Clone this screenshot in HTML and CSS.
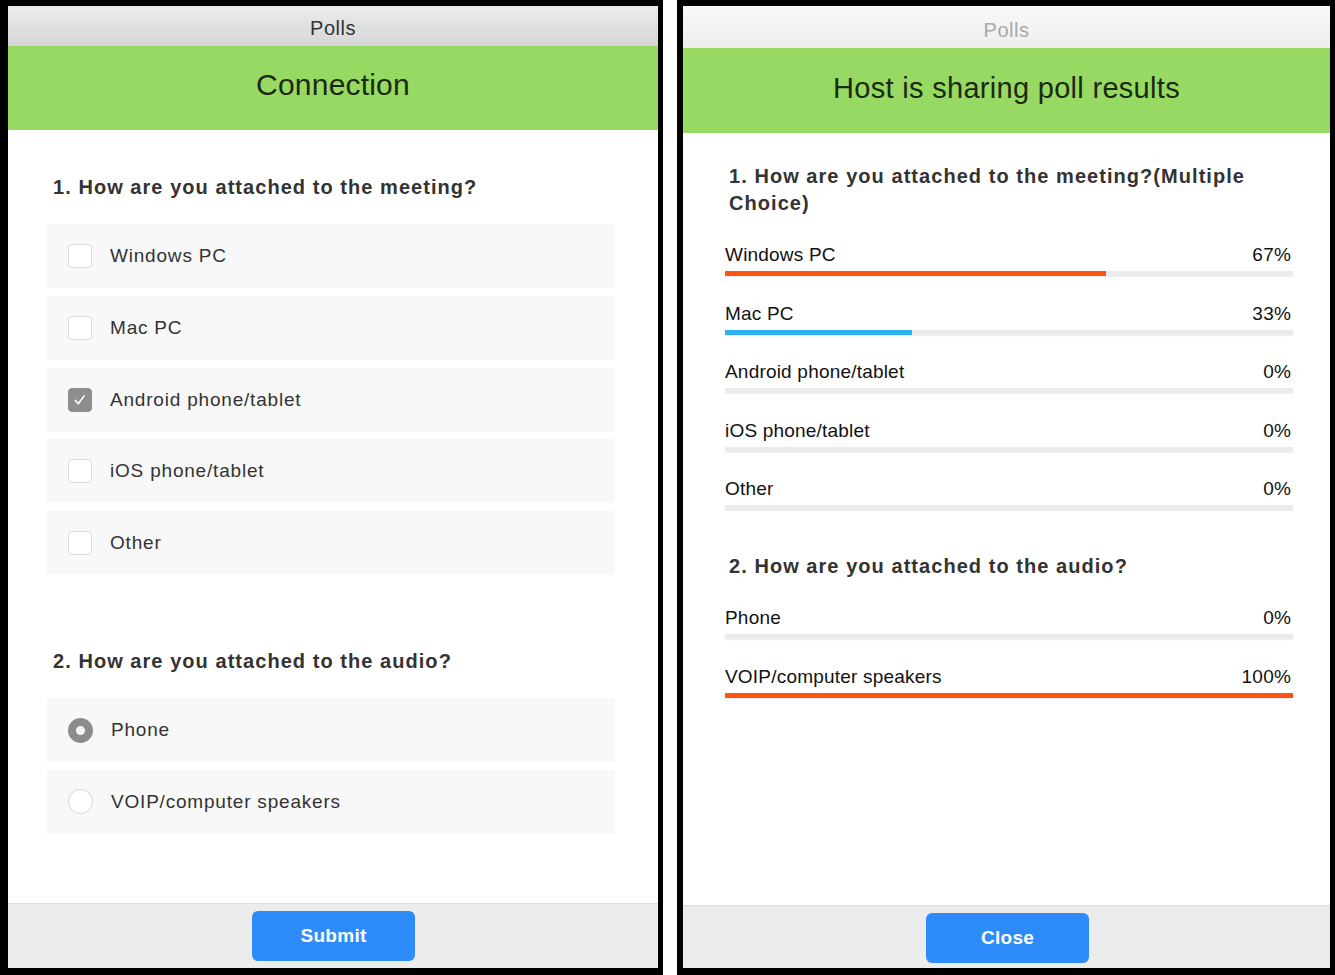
FILE: index.html
```html
<!DOCTYPE html>
<html lang="en">
<head>
<meta charset="utf-8">
<title>Polls</title>
<link rel="stylesheet" href="styles.css">
</head>
<body>
<div class="stage">
  <section class="panel panel-left">
    <header class="titlebar">Polls</header>
    <div class="banner">Connection</div>
    <main class="content vote">
      <h2 class="q q1">1. How are you attached to the meeting?</h2>
      <ul class="options">
        <li class="opt"><span class="box"></span><span class="lbl">Windows PC</span></li>
        <li class="opt"><span class="box"></span><span class="lbl">Mac PC</span></li>
        <li class="opt"><span class="box checked"><svg viewBox="0 0 24 24" width="22" height="22"><path d="M7 12.5l3.2 3.6L16.5 7.5" fill="none" stroke="#fff" stroke-width="1.8" stroke-linecap="round" stroke-linejoin="round"/></svg></span><span class="lbl">Android phone/tablet</span></li>
        <li class="opt"><span class="box"></span><span class="lbl">iOS phone/tablet</span></li>
        <li class="opt"><span class="box"></span><span class="lbl">Other</span></li>
      </ul>
      <h2 class="q q2">2. How are you attached to the audio?</h2>
      <ul class="options">
        <li class="opt"><span class="radio on"></span><span class="lbl">Phone</span></li>
        <li class="opt"><span class="radio"></span><span class="lbl">VOIP/computer speakers</span></li>
      </ul>
    </main>
    <footer class="footer"><button class="btn">Submit</button></footer>
  </section>

  <section class="panel panel-right">
    <header class="titlebar light">Polls</header>
    <div class="banner">Host is sharing poll results</div>
    <main class="content results">
      <h2 class="q rq1">1. How are you attached to the meeting?(Multiple Choice)</h2>
      <div class="res">
        <div class="res-row"><span>Windows PC</span><span>67%</span></div>
        <div class="track"><div class="fill orange" style="width:67%"></div></div>
      </div>
      <div class="res">
        <div class="res-row"><span>Mac PC</span><span>33%</span></div>
        <div class="track"><div class="fill blue" style="width:33%"></div></div>
      </div>
      <div class="res">
        <div class="res-row"><span>Android phone/tablet</span><span>0%</span></div>
        <div class="track"></div>
      </div>
      <div class="res">
        <div class="res-row"><span>iOS phone/tablet</span><span>0%</span></div>
        <div class="track"></div>
      </div>
      <div class="res">
        <div class="res-row"><span>Other</span><span>0%</span></div>
        <div class="track"></div>
      </div>
      <h2 class="q rq2">2. How are you attached to the audio?</h2>
      <div class="res">
        <div class="res-row"><span>Phone</span><span>0%</span></div>
        <div class="track"></div>
      </div>
      <div class="res">
        <div class="res-row"><span>VOIP/computer speakers</span><span>100%</span></div>
        <div class="track"><div class="fill orange" style="width:100%"></div></div>
      </div>
    </main>
    <footer class="footer footer-r"><button class="btn">Close</button></footer>
  </section>
</div>
</body>
</html>
```
FILE: styles.css
```css
* { box-sizing: border-box; }
html, body { margin: 0; padding: 0; background: #fff; }
body { font-family: "Liberation Sans", Arial, sans-serif; color: #222; }

.stage {
  display: flex;
  gap: 14px;
  width: 1335px;
  height: 975px;
}

.panel {
  display: flex;
  flex-direction: column;
  border-style: solid;
  border-color: #000;
  background: #fff;
  height: 975px;
}
.panel-left { width: 663px; border-width: 6px 5px 7px 8px; }
.panel-right { width: 658px; border-width: 6px 5px 7px 6px; }

.titlebar {
  height: 40px;
  flex: none;
  display: flex;
  align-items: center;
  justify-content: center;
  font-size: 20px;
  letter-spacing: 0.5px;
  color: #333;
  background: linear-gradient(#ececec, #d6d6d6);
  padding-top: 4px;
}
.titlebar.light {
  height: 42px;
  background: linear-gradient(#f9f9f9, #eeeeee);
  color: #a8a8a8;
  padding-top: 6px;
}

.banner {
  flex: none;
  height: 84px;
  background: #98d963;
  display: flex;
  align-items: center;
  justify-content: center;
  font-size: 30px;
  color: #1a2a10;
  letter-spacing: 0.2px;
  padding-bottom: 7px;
}
.panel-right .banner { height: 85px; font-size: 29px; letter-spacing: 0.3px; padding-bottom: 5px; }

.content { flex: 1; }

/* vote panel */
.vote { padding: 44px 43px 0 39px; }
.q {
  margin: 0;
  font-size: 20px;
  font-weight: bold;
  color: #333;
  letter-spacing: 1.05px;
  line-height: 26px;
}
.vote .q { padding-left: 6px; }
.vote .q2 { margin-top: 73px; }

.options {
  list-style: none;
  margin: 24px 0 0;
  padding: 0;
  display: flex;
  flex-direction: column;
  gap: 7.75px;
}
.opt {
  height: 64px;
  background: #f8f8f8;
  display: flex;
  align-items: center;
  padding-left: 21px;
  font-size: 19px;
  color: #333;
  letter-spacing: 0.8px;
}
.lbl { margin-left: 18px; }

.box {
  width: 24px;
  height: 24px;
  border: 1.5px solid #dcdcdc;
  border-radius: 4px;
  background: #fff;
  display: flex;
  align-items: center;
  justify-content: center;
}
.box.checked { background: #8e8e8e; border-color: #8e8e8e; }

.radio {
  width: 25px;
  height: 25px;
  border-radius: 50%;
  border: 1.5px solid #d6d6d6;
  background: #fff;
}
.radio.on {
  border: 8px solid #8c8c8c;
  background: #f4f4f4;
}

/* footer */
.footer {
  flex: none;
  height: 65px;
  background: #ececec;
  border-top: 1px solid #dedede;
  display: flex;
  justify-content: center;
  padding-top: 7px;
}
.footer-r { height: 63px; padding-top: 7px; }
.btn {
  width: 163px;
  height: 50px;
  border: none;
  border-radius: 6px;
  background: #2e8cfa;
  color: #fff;
  font-family: "Liberation Sans", Arial, sans-serif;
  font-size: 19px;
  font-weight: bold;
  letter-spacing: 0.3px;
}
.panel-left .btn { margin-left: 1px; }
.panel-right .btn { margin-left: 2px; }

/* results panel */
.results { padding: 30px 37px 0 42px; }
.results .q { padding-left: 4px; line-height: 27px; }
.rq1 { margin-bottom: 27px; }
.rq2 { margin-top: 16px; margin-bottom: 27px; }

.res { height: 58.6px; }
.res-row {
  display: flex;
  justify-content: space-between;
  font-size: 19px;
  color: #111;
  line-height: 22px;
  letter-spacing: 0.2px;
}
.res-row span:last-child { padding-right: 2px; }
.track {
  margin-top: 5px;
  height: 5px;
  background: #ebebeb;
  box-shadow: 0 1px 1px rgba(0,0,0,0.06);
}
.fill { height: 100%; }
.fill.orange { background: #ff5412; }
.fill.blue { background: #2cb1f3; }
```
